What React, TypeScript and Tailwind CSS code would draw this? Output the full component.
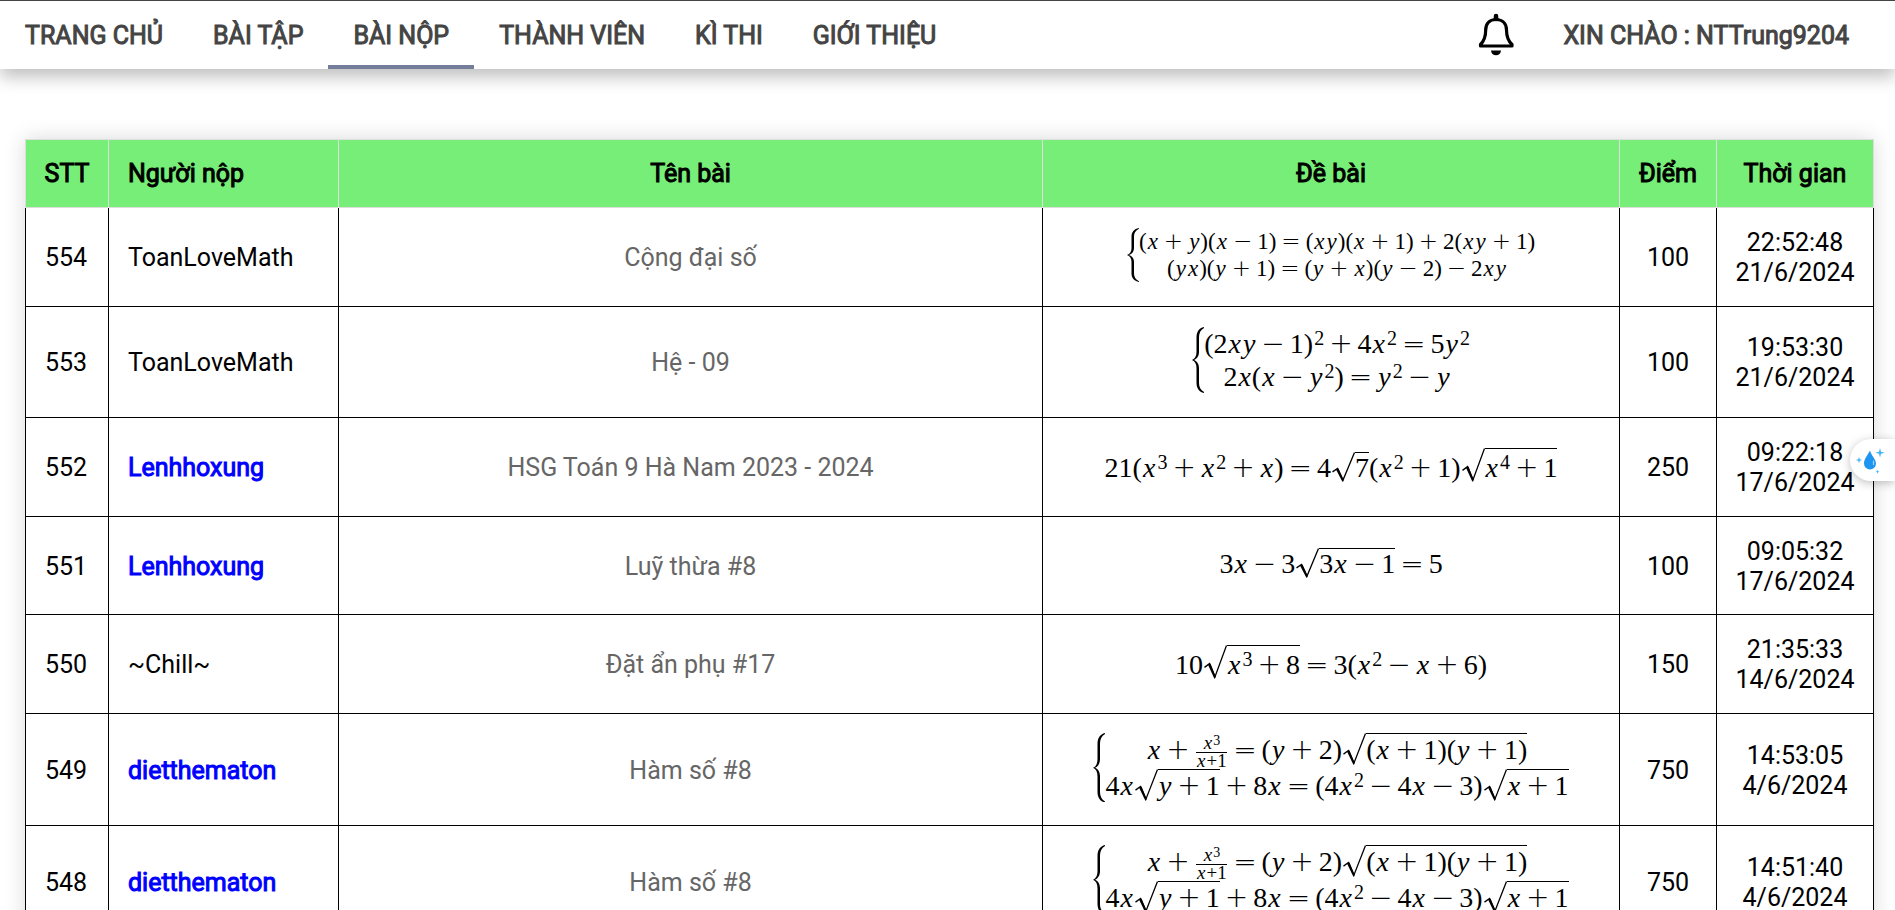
import React from "react";

type Kids = { children?: React.ReactNode };

const V = ({ children }: Kids) => <i className="px-px italic">{children}</i>;
const Op = ({ children }: Kids) => (
  <span className="px-[5px] font-['DejaVu_Sans'] leading-none font-extralight">{children}</span>
);
const Sup = ({ children = "2" }: Kids) => (
  <span className="relative -top-2 pl-px text-[20px] leading-none">{children}</span>
);
const Sqrt = ({ children, tall = false }: Kids & { tall?: boolean }) => (
  <span className="inline-flex items-stretch">
    <span className="relative w-6 shrink-0">
      <svg className="absolute inset-0 h-full w-full" viewBox="0 0 24 32" preserveAspectRatio="none" aria-hidden="true">
        <path d="M1.500 20.500L6.500 17L12 29L23.500 .5" fill="none" stroke="black" strokeWidth="1.300" />
        <path d="M5 18L11.500 31L12.700 29L7.500 17Z" fill="black" />
      </svg>
    </span>
    <span className={tall ? "self-baseline border-t border-black pt-1" : "self-baseline border-t border-black"}>
      {children}
    </span>
  </span>
);
const Frac = ({ top, bottom }: { top: React.ReactNode; bottom: React.ReactNode }) => (
  <span className="inline-flex flex-col items-center align-middle text-[19px] leading-[16px]">
    <span className="px-2">{top}</span>
    <span className="border-t border-black">{bottom}</span>
  </span>
);
const Brace = () => (
  <span className="relative w-3 shrink-0">
    <svg className="absolute inset-0 h-full w-full" viewBox="0 0 12 64" preserveAspectRatio="none" aria-hidden="true">
      <path
        d="M12 0C7 1 4.500 5 4.500 10V24C4.500 28 3 31 0 32C3 33 4.500 36 4.500 40V54C4.500 59 7 63 12 64V63C8.500 61 7 58 7 54V40C7 36 5 33 2 32C5 31 7 28 7 24V10C7 6 8.500 3 12 1Z"
        fill="black"
      />
    </svg>
  </span>
);
const Cases = ({ children }: Kids) => (
  <span className="inline-flex items-stretch align-middle">
    <Brace />
    <span className="flex flex-col items-center">{children}</span>
  </span>
);

const x = <V>x</V>;
const y = <V>y</V>;
const plus = <Op>+</Op>;
const minus = <Op>−</Op>;
const eq = <Op>=</Op>;

const system554 = (
  <span className="text-[23px] leading-[27px]">
    <Cases>
      <span>({x}{plus}{y})({x}{minus}1){eq}({x}{y})({x}{plus}1){plus}2({x}{y}{plus}1)</span>
      <span>({y}{x})({y}{plus}1){eq}({y}{plus}{x})({y}{minus}2){minus}2{x}{y}</span>
    </Cases>
  </span>
);
const system553 = (
  <span className="text-[28px] leading-[33px]">
    <Cases>
      <span>(2{x}{y}{minus}1)<Sup />{plus}4{x}<Sup />{eq}5{y}<Sup /></span>
      <span>2{x}({x}{minus}{y}<Sup />){eq}{y}<Sup />{minus}{y}</span>
    </Cases>
  </span>
);
const eq552 = (
  <span>
    21({x}<Sup>3</Sup>{plus}{x}<Sup />{plus}{x}){eq}4<Sqrt>7</Sqrt>({x}<Sup />{plus}1)
    <Sqrt tall>{x}<Sup>4</Sup>{plus}1</Sqrt>
  </span>
);
const eq551 = <span>3{x}{minus}3<Sqrt>3{x}{minus}1</Sqrt>{eq}5</span>;
const eq550 = (
  <span>10<Sqrt tall>{x}<Sup>3</Sup>{plus}8</Sqrt>{eq}3({x}<Sup />{minus}{x}{plus}6)</span>
);
const systemHam = (
  <span className="text-[28px] leading-[32px]">
    <Cases>
      <span>
        {x}{plus}
        <Frac top={<>{x}<span className="relative -top-1 text-[14px] leading-none">3</span></>} bottom={<>{x}+1</>} />
        {eq}({y}{plus}2)<Sqrt>({x}{plus}1)({y}{plus}1)</Sqrt>
      </span>
      <span>
        4{x}<Sqrt>{y}{plus}1</Sqrt>{plus}8{x}{eq}(4{x}<Sup />{minus}4{x}{minus}3)<Sqrt>{x}{plus}1</Sqrt>
      </span>
    </Cases>
  </span>
);

const rows = [
  { id: 554, user: "ToanLoveMath", blue: false, name: "Cộng đại số", math: system554, score: 100, time: "22:52:48", date: "21/6/2024", h: "h-[99px]" },
  { id: 553, user: "ToanLoveMath", blue: false, name: "Hệ - 09", math: system553, score: 100, time: "19:53:30", date: "21/6/2024", h: "h-[111px]" },
  { id: 552, user: "Lenhhoxung", blue: true, name: "HSG Toán 9 Hà Nam 2023 - 2024", math: eq552, score: 250, time: "09:22:18", date: "17/6/2024", h: "h-[99px]" },
  { id: 551, user: "Lenhhoxung", blue: true, name: "Luỹ thừa #8", math: eq551, score: 100, time: "09:05:32", date: "17/6/2024", h: "h-[98px]" },
  { id: 550, user: "~Chill~", blue: false, name: "Đặt ẩn phụ #17", math: eq550, score: 150, time: "21:35:33", date: "14/6/2024", h: "h-[99px]" },
  { id: 549, user: "dietthematon", blue: true, name: "Hàm số #8", math: systemHam, score: 750, time: "14:53:05", date: "4/6/2024", h: "h-[112px]" },
  { id: 548, user: "dietthematon", blue: true, name: "Hàm số #8", math: systemHam, score: 750, time: "14:51:40", date: "4/6/2024", h: "h-[112px]" },
];

const nav = ["TRANG CHỦ", "BÀI TẬP", "BÀI NỘP", "THÀNH VIÊN", "KÌ THI", "GIỚI THIỆU"];

export default function App() {
  return (
    <div className="h-screen overflow-hidden bg-white font-[Roboto,sans-serif] text-[25px] leading-[30px] text-black">
      <header className="flex h-[69px] items-stretch border-t border-[#444] bg-white pr-[21px] text-[#444] shadow-[0_8px_16px_rgba(0,0,0,0.25)] [-webkit-text-stroke:1px]">
        <nav className="flex">
          {nav.map((item) => (
            <a
              key={item}
              href="#"
              className={
                item === "BÀI NỘP"
                  ? "flex items-center border-b-4 border-[#747d9a] px-[25px] pt-1.5"
                  : "flex items-center border-b-4 border-transparent px-[25px] pt-1.5"
              }
            >
              {item}
            </a>
          ))}
        </nav>
        <button type="button" aria-label="Thông báo" className="mr-[17px] ml-auto flex items-center">
          <svg className="h-[50px] w-[50px]" viewBox="0 0 50 50" aria-hidden="true">
            <path d="M25 9.500C18 9.500 14.700 14 14.700 20C14.700 27 13 31 9.500 34.500V36H41V34.500C37.300 31 35.500 27 35.500 20C35.500 14 32 9.500 25 9.500Z" fill="none" stroke="black" strokeWidth="3.200" strokeLinejoin="round" />
            <path d="M25 6V9" stroke="black" strokeWidth="4.500" strokeLinecap="round" />
            <path d="M20 40.500H30A5 4.800 0 0 1 20 40.500Z" fill="black" />
          </svg>
        </button>
        <a href="#" className="flex items-center px-[25px] pt-0.5">XIN CHÀO : NTTrung9204</a>
      </header>

      <main className="pt-[70px] pr-[21px] pl-[25px]">
        <table className="w-full table-fixed border-collapse text-center shadow-[0_0_20px_rgba(0,0,0,0.15)]">
          <colgroup>
            <col className="w-[83px]" />
            <col className="w-[230px]" />
            <col className="w-[38.1%]" />
            <col />
            <col className="w-[97px]" />
            <col className="w-[157px]" />
          </colgroup>
          <thead className="bg-[#77ee77] [-webkit-text-stroke:1px]">
            <tr className="h-[68px]">
              {["STT", "Người nộp", "Tên bài", "Đề bài", "Điểm", "Thời gian"].map((h) => (
                <th key={h} className={h === "Người nộp" ? "border border-[#ddd] px-[19px] text-left font-normal" : "border border-[#ddd] font-normal"}>
                  {h}
                </th>
              ))}
            </tr>
          </thead>
          <tbody>
            {rows.map((r) => (
              <tr key={r.id} className={r.h}>
                <td className="border border-black pt-0.5 pr-0.5">{r.id}</td>
                <td className="border border-black px-[19px] pt-0.5 text-left">
                  <a href="#" className={r.blue ? "text-[#00f] [-webkit-text-stroke:1px]" : ""}>{r.user}</a>
                </td>
                <td className="border border-black pt-0.5">
                  <a href="#" className="text-[#666]">{r.name}</a>
                </td>
                <td className="border border-black pb-1 font-['Liberation_Serif',serif] text-[28px] leading-[30px] whitespace-nowrap">
                  {r.math}
                </td>
                <td className="border border-black pt-0.5">{r.score}</td>
                <td className="border border-black pt-0.5">
                  {r.time}
                  <br />
                  {r.date}
                </td>
              </tr>
            ))}
          </tbody>
        </table>
      </main>

      <button
        type="button"
        aria-label="Trợ lý"
        className="fixed top-[439px] right-0 flex h-[42px] w-[45px] items-center rounded-l-full bg-white pl-1 shadow-[0_2px_10px_rgba(0,0,0,0.25)]"
      >
        <svg className="h-8 w-8" viewBox="0 0 32 32" aria-hidden="true">
          <path d="M16 6.500C13 12 10 15.500 10 19.500A6 6 0 0 0 22 19.500C22 15.500 17.500 12 16 6.500Z" fill="#1e96f0" />
          <path d="M19.500 17V20.500" stroke="#9ad4ff" strokeWidth="1.200" strokeLinecap="round" />
          <path d="M26 4L27 7.800L30.800 8.800L27 9.800L26 13.600L25 9.800L21.200 8.800L25 7.800ZM5 13L5.800 15.300L8.200 16L5.800 16.700L5 19.200L4.200 16.700L1.800 16L4.200 15.300ZM23.500 25.500L24 27.200L25.600 27.700L24 28.200L23.500 30L23 28.200L21.400 27.700L23 27.200Z" fill="#45b4f7" />
        </svg>
      </button>
    </div>
  );
}
